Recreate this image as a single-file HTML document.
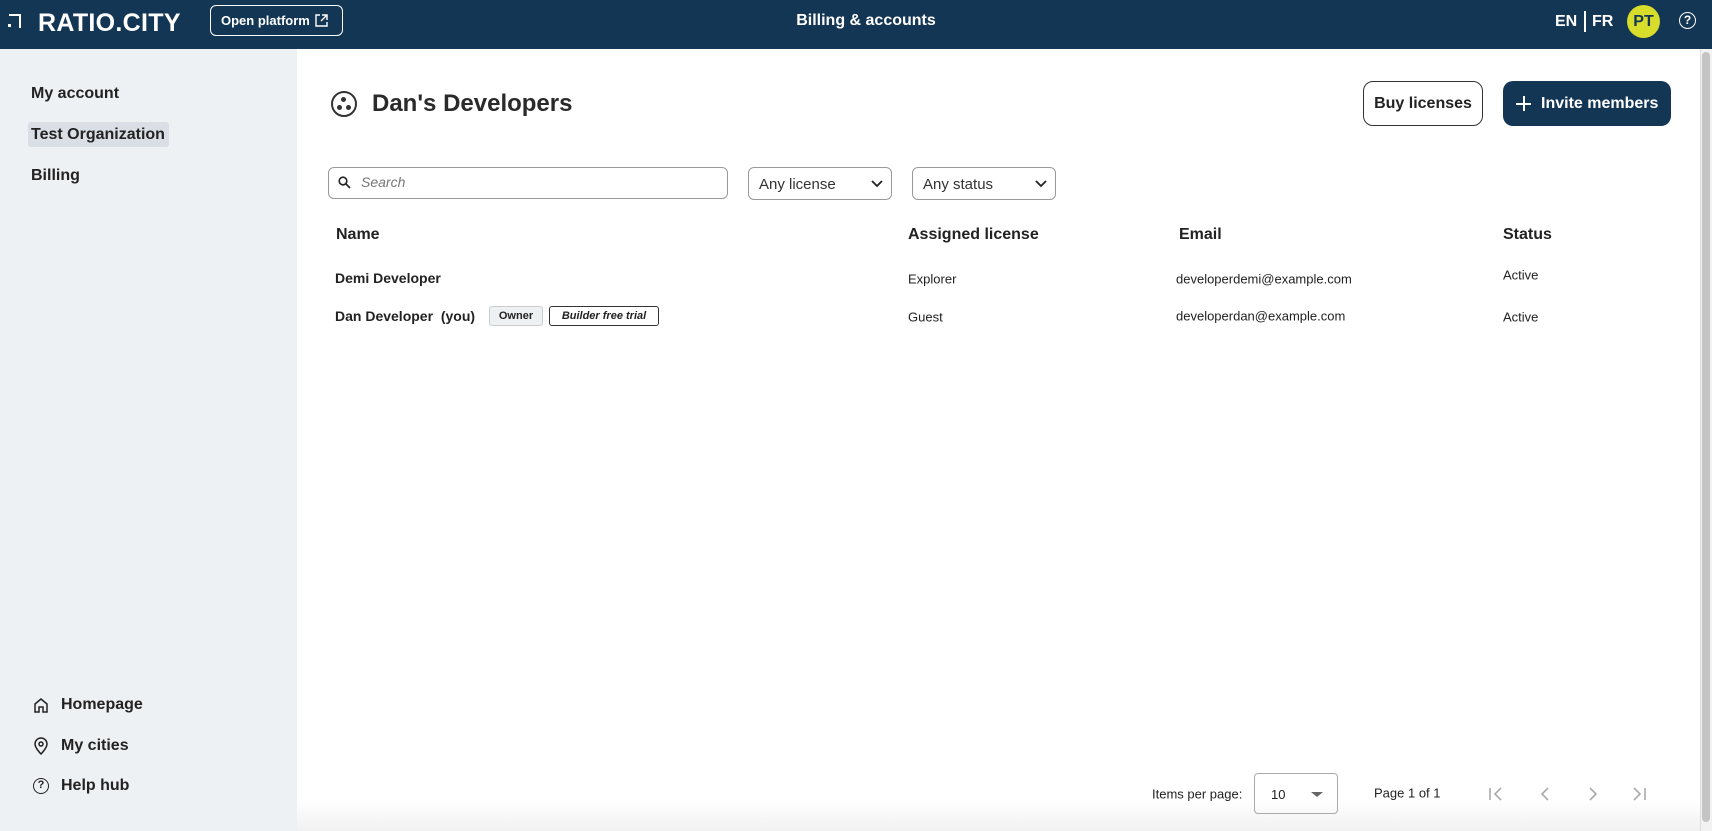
<!DOCTYPE html>
<html><head><meta charset="utf-8"><style>
*{box-sizing:border-box;margin:0;padding:0}
body{width:1712px;height:831px;overflow:hidden;font-family:"Liberation Sans",sans-serif;color:#222;background:#fff;position:relative}
.abs{position:absolute}
.hdr{left:0;top:0;width:1712px;height:49px;background:#143655;color:#fff}
.side{left:0;top:49px;width:297px;height:782px;background:#eef1f4}
.nav{position:absolute;left:31px;font-size:16px;font-weight:bold;color:#222;transform:translateY(-50%)}
.th{position:absolute;font-size:16px;font-weight:bold;color:#222;transform:translateY(-50%)}
.td{position:absolute;font-size:13px;color:#222;transform:translateY(-50%)}
.sel{position:absolute;top:167px;height:33px;border:1px solid #999;border-radius:6px;font-size:15px;color:#333;padding:8px 0 0 10px}
</style></head><body>
<div class="abs hdr">
  <div class="abs" style="left:9px;top:14px;width:12px;height:14px;border-top:2.5px solid #fff;border-right:2.5px solid #fff"></div>
  <div class="abs" style="left:8px;top:24px;width:3px;height:3px;background:#fff"></div>
  <div class="abs" style="left:38px;top:9px;font-size:25px;font-weight:bold;letter-spacing:0.3px">RATIO.CITY</div>
  <div class="abs" style="left:210px;top:5px;width:133px;height:31px;border:1px solid #fff;border-radius:6px;font-size:13px;font-weight:bold;padding:7px 0 0 10px">Open platform
    <svg class="abs" style="left:104px;top:8px" width="13" height="13" viewBox="0 0 13 13" fill="none" stroke="#fff" stroke-width="1.4"><path d="M5 1H1v11h11V8M7 1h5v5M12 1L6 7"/></svg></div>
  <div class="abs" style="left:766px;width:200px;top:12px;text-align:center;font-size:16px;font-weight:bold">Billing &amp; accounts</div>
  <div class="abs" style="left:1555px;top:13px;font-size:16px;font-weight:bold">EN</div>
  <div class="abs" style="left:1584px;top:11px;width:2px;height:21px;background:#fff"></div>
  <div class="abs" style="left:1592px;top:13px;font-size:16px;font-weight:bold">FR</div>
  <div class="abs" style="left:1627px;top:5px;width:33px;height:33px;border-radius:50%;background:#d8dc2a;color:#143655;font-size:16px;font-weight:bold;text-align:center;line-height:33px">PT</div>
  <div class="abs" style="left:1679px;top:12px;width:17px;height:17px;border:1.8px solid #fff;border-radius:50%;font-size:12px;font-weight:bold;text-align:center;line-height:14px">?</div>
</div>
<div class="abs side"></div>
<div class="abs" style="left:28px;top:122px;width:141px;height:25px;background:#dadfe5;border-radius:3px"></div>
<div class="nav" style="top:94px">My account</div>
<div class="nav" style="top:135px">Test Organization</div>
<div class="nav" style="top:176px">Billing</div>
<svg class="abs" style="left:33px;top:697px" width="16" height="16" viewBox="0 0 16 16" fill="none" stroke="#222" stroke-width="1.5"><path d="M2 7l6-5 6 5v8H10v-5H6v5H2z"/></svg>
<div class="nav" style="left:61px;top:705px">Homepage</div>
<svg class="abs" style="left:33px;top:737px" width="16" height="18" viewBox="0 0 16 18" fill="none" stroke="#222" stroke-width="1.5"><path d="M8 17s6-6 6-10A6 6 0 0 0 2 7c0 4 6 10 6 10z"/><circle cx="8" cy="7" r="2"/></svg>
<div class="nav" style="left:61px;top:746px">My cities</div>
<div class="abs" style="left:33px;top:778px;width:16px;height:16px;border:1.5px solid #222;border-radius:50%;font-size:11px;font-weight:bold;text-align:center;line-height:13px">?</div>
<div class="nav" style="left:61px;top:786px">Help hub</div>

<div class="abs" style="left:331px;top:91px;width:26px;height:26px;border:2.2px solid #333;border-radius:50%"></div>
<div class="abs" style="left:341px;top:97px;width:5px;height:5px;border-radius:50%;background:#333"></div>
<div class="abs" style="left:337px;top:105px;width:5px;height:5px;border-radius:50%;background:#333"></div>
<div class="abs" style="left:346px;top:105px;width:5px;height:5px;border-radius:50%;background:#333"></div>
<div class="abs" style="left:372px;top:90px;font-size:24px;font-weight:bold;color:#2a2a2a">Dan's Developers</div>

<div class="abs" style="left:1363px;top:81px;width:120px;height:45px;border:1px solid #333;border-radius:10px;font-size:16px;font-weight:bold;text-align:center;line-height:43px">Buy licenses</div>
<div class="abs" style="left:1503px;top:81px;width:168px;height:45px;background:#143655;border-radius:10px;color:#fff;font-size:16px;font-weight:bold;line-height:45px;padding-left:38px">Invite members
  <div class="abs" style="left:13px;top:22px;width:15px;height:2px;background:#fff"></div>
  <div class="abs" style="left:19.5px;top:15px;width:2px;height:15px;background:#fff"></div></div>

<div class="abs" style="left:328px;top:167px;width:400px;height:32px;border:1px solid #999;border-radius:6px"></div>
<svg class="abs" style="left:338px;top:176px" width="13" height="13" viewBox="0 0 13 13" fill="none" stroke="#222" stroke-width="1.6"><circle cx="5" cy="5" r="3.8"/><path d="M8 8l4 4"/></svg>
<div class="abs" style="left:361px;top:174px;font-size:14px;font-style:italic;color:#777">Search</div>
<div class="sel" style="left:748px;width:144px">Any license<svg class="abs" style="right:8px;top:12px" width="12" height="8" viewBox="0 0 12 8" fill="none" stroke="#222" stroke-width="1.8"><path d="M1 1l5 5 5-5"/></svg></div>
<div class="sel" style="left:912px;width:144px">Any status<svg class="abs" style="right:8px;top:12px" width="12" height="8" viewBox="0 0 12 8" fill="none" stroke="#222" stroke-width="1.8"><path d="M1 1l5 5 5-5"/></svg></div>

<div class="th" style="left:336px;top:235px">Name</div>
<div class="th" style="left:908px;top:235px">Assigned license</div>
<div class="th" style="left:1179px;top:235px">Email</div>
<div class="th" style="left:1503px;top:235px">Status</div>

<div class="td" style="left:335px;top:278px;font-size:14px;font-weight:bold">Demi Developer</div>
<div class="td" style="left:908px;top:279px">Explorer</div>
<div class="td" style="left:1176px;top:279px">developerdemi@example.com</div>
<div class="td" style="left:1503px;top:275px">Active</div>

<div class="td" style="left:335px;top:316px;font-size:14px;font-weight:bold">Dan Developer&nbsp; (you)</div>
<div class="abs" style="left:489px;top:306px;width:54px;height:20px;background:#eef1f4;border:1px solid #ccc;border-radius:3px;font-size:11px;font-weight:bold;text-align:center;line-height:18px">Owner</div>
<div class="abs" style="left:549px;top:306px;width:110px;height:20px;border:1px solid #333;border-radius:3px;font-size:11px;font-weight:bold;font-style:italic;text-align:center;line-height:18px">Builder free trial</div>
<div class="td" style="left:908px;top:317px">Guest</div>
<div class="td" style="left:1176px;top:316px">developerdan@example.com</div>
<div class="td" style="left:1503px;top:317px">Active</div>

<div class="abs" style="left:297px;top:800px;width:1403px;height:31px;background:linear-gradient(#fff,#f1f1f1)"></div>
<div class="td" style="left:1152px;top:794px;font-size:13px">Items per page:</div>
<div class="abs" style="left:1254px;top:773px;width:84px;height:41px;border:1px solid #aaa;border-radius:4px;font-size:13px;padding:13px 0 0 16px">10
  <div class="abs" style="left:56px;top:18px;border-left:6px solid transparent;border-right:6px solid transparent;border-top:5px solid #666"></div></div>
<div class="td" style="left:1374px;top:793px;font-size:13px">Page 1 of 1</div>
<svg class="abs" style="left:1488px;top:786px" width="160" height="16" viewBox="0 0 160 16" fill="none" stroke="#aaa" stroke-width="1.6"><path d="M2 2v12M13 2L7 8l6 6M60 2l-6 6 6 6M102 2l6 6-6 6M146 2l6 6-6 6M157 2v12"/></svg>

<div class="abs" style="left:1700px;top:49px;width:12px;height:782px;background:#f2f2f2;border-left:1px solid #ddd"></div>
<div class="abs" style="left:1702px;top:52px;width:8px;height:770px;background:#c4c4c4;border-radius:4px"></div>
</body></html>
